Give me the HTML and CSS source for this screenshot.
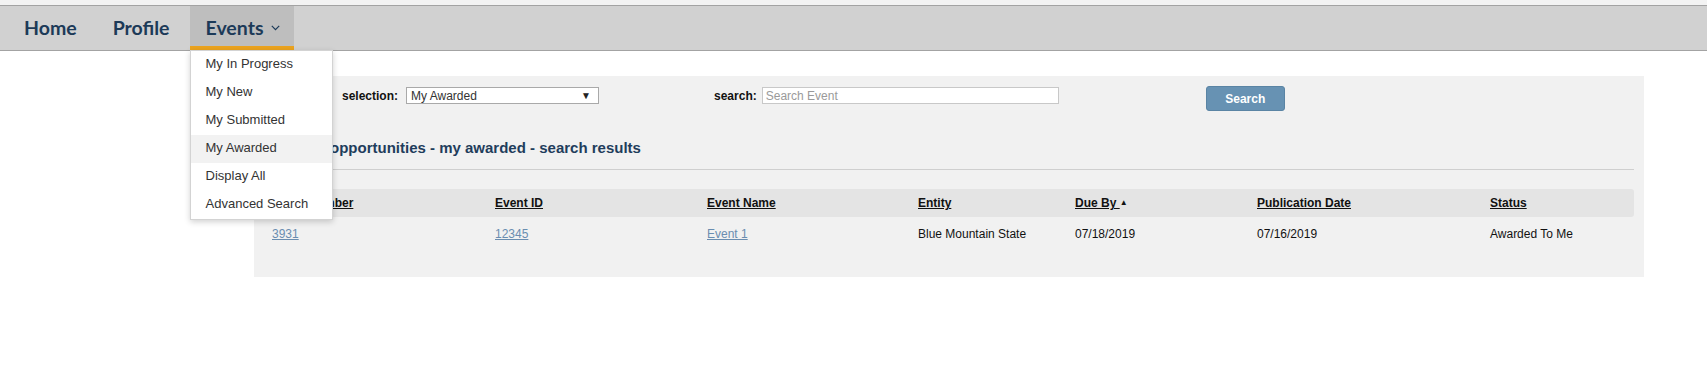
FILE: index.html
```html
<!DOCTYPE html>
<html>
<head>
<meta charset="utf-8">
<link rel="stylesheet" href="styles.css">
</head>
<body>
<div class="topstrip"></div>
<nav class="nav">
  <a class="nav-item">Home</a>
  <a class="nav-item">Profile</a>
  <div class="nav-item active">
    <span>Events</span>
    <svg class="chev" width="9" height="6" viewBox="0 0 9 6"><polyline points="0.8,0.8 4.5,4.6 8.2,0.8" fill="none" stroke="#1c3a58" stroke-width="1.2"/></svg>
    <ul class="dropdown">
      <li>My In Progress</li>
      <li>My New</li>
      <li>My Submitted</li>
      <li class="hover">My Awarded</li>
      <li>Display All</li>
      <li>Advanced Search</li>
    </ul>
  </div>
</nav>
<main class="panel">
  <div class="form-row">
    <div class="field sel-field">
      <label class="lbl">selection:</label>
      <div class="select"><span>My Awarded</span><span class="arrow">▼</span></div>
    </div>
    <div class="field search-field">
      <label class="lbl">search:</label>
      <input class="search-input" type="text" placeholder="Search Event">
    </div>
    <button class="btn">Search</button>
  </div>
  <h2 class="heading">Event opportunities - my awarded - search results</h2>
  <div class="rule"></div>
  <table class="results">
    <colgroup>
      <col style="width:223px"><col style="width:212px"><col style="width:211px"><col style="width:157px"><col style="width:182px"><col style="width:233px"><col style="width:152px">
    </colgroup>
    <thead>
      <tr>
        <th><a>Event Number</a></th>
        <th><a>Event ID</a></th>
        <th><a>Event Name</a></th>
        <th><a>Entity</a></th>
        <th><a>Due By <span class="sort">▲</span></a></th>
        <th><a>Publication Date</a></th>
        <th><a>Status</a></th>
      </tr>
    </thead>
    <tbody>
      <tr>
        <td><a class="link">3931</a></td>
        <td><a class="link">12345</a></td>
        <td><a class="link">Event 1</a></td>
        <td>Blue Mountain State</td>
        <td>07/18/2019</td>
        <td>07/16/2019</td>
        <td>Awarded To Me</td>
      </tr>
    </tbody>
  </table>
</main>
</body>
</html>
```

FILE: styles.css
```css
html, body {
  margin: 0;
  padding: 0;
  background: #ffffff;
  font-family: "Liberation Sans", Arial, sans-serif;
}

.topstrip {
  height: 5px;
  background: #f3f3f3;
}

.nav {
  display: flex;
  gap: 4px;
  height: 44px;
  padding-left: 8px;
  background: #d1d1d1;
  border-top: 1px solid #a3a3a3;
  border-bottom: 1px solid #a3a3a3;
}

.nav-item {
  display: flex;
  align-items: center;
  gap: 8px;
  padding: 0 16px 2px 16px;
  font-family: Lato, "Open Sans", sans-serif;
  font-weight: 700;
  font-size: 19.5px;
  color: #1c3a58;
  cursor: pointer;
}

.nav-item.active {
  position: relative;
  padding-right: 14px;
  background: #bebebe;
  box-shadow: inset 0 -4px 0 #eba31f;
}

.chev {
  margin-top: 2px;
}

.dropdown {
  position: absolute;
  top: 100%;
  left: 0;
  z-index: 10;
  width: 141px;
  margin: 0;
  padding: 0;
  list-style: none;
  background: #ffffff;
  border: 1px solid #d3d3d3;
  box-shadow: 0 2px 6px rgba(0, 0, 0, 0.18);
}

.dropdown li {
  height: 28px;
  line-height: 26px;
  padding-left: 15px;
  font-family: "Liberation Sans", Arial, sans-serif;
  font-weight: 400;
  font-size: 13px;
  color: #333333;
  white-space: nowrap;
}

.dropdown li.hover {
  background: #f2f2f2;
}

.panel {
  box-sizing: border-box;
  width: 1390px;
  height: 201px;
  margin: 25px 0 0 254px;
  padding: 10px 10px 0 10px;
  background: #f1f1f1;
}

.form-row {
  display: flex;
  align-items: flex-start;
  height: 25px;
}

.field {
  display: flex;
  align-items: center;
  margin-top: 1px;
}

.sel-field {
  margin-left: 78px;
  gap: 8px;
}

.search-field {
  margin-left: 115px;
  gap: 5px;
}

.lbl {
  font-weight: 700;
  font-size: 12px;
  color: #111111;
}

.select {
  box-sizing: border-box;
  display: flex;
  align-items: center;
  justify-content: space-between;
  width: 193px;
  height: 17px;
  padding: 0 7px 0 4px;
  background: #ffffff;
  border: 1px solid #a9a9a9;
  font-size: 12px;
  color: #333333;
}

.arrow {
  font-size: 10px;
  color: #222222;
}

.search-input {
  box-sizing: border-box;
  width: 297px;
  height: 17px;
  margin: 0;
  padding: 0 3px;
  border: 1px solid #c8c8c8;
  background: #ffffff;
  font-family: "Liberation Sans", Arial, sans-serif;
  font-size: 12px;
  color: #333333;
  outline: none;
}

.search-input::placeholder {
  color: #9a9a9a;
}

.btn {
  box-sizing: border-box;
  width: 79px;
  height: 25px;
  margin-left: 147px;
  padding: 0;
  background: #6792b3;
  border: 1px solid #5a84a4;
  border-radius: 3px;
  color: #ffffff;
  font-family: "Liberation Sans", Arial, sans-serif;
  font-weight: 700;
  font-size: 12px;
}

.heading {
  margin: 28px 0 0 21px;
  font-size: 15px;
  line-height: 17px;
  font-weight: 700;
  color: #1f3d5c;
}

.rule {
  height: 1px;
  margin-top: 13px;
  background: #cfcfcf;
}

.results {
  width: 1370px;
  margin-top: 19px;
  border-collapse: collapse;
  table-layout: fixed;
  font-size: 12px;
}

.results th {
  height: 28px;
  padding: 0 0 0 8px;
  text-align: left;
  background: #e4e4e4;
  font-weight: 700;
  color: #111111;
}

.results th:first-child {
  border-radius: 3px 0 0 3px;
}

.results th:last-child {
  border-radius: 0 3px 3px 0;
}

.results th a {
  text-decoration: underline;
  color: #111111;
}

.sort {
  display: inline-block;
  font-size: 8px;
  vertical-align: 2px;
  text-decoration: none;
}

.results td {
  height: 34px;
  padding: 0 0 0 8px;
  color: #111111;
  vertical-align: middle;
}

.link {
  color: #6a8db0;
  text-decoration: underline;
}
```
